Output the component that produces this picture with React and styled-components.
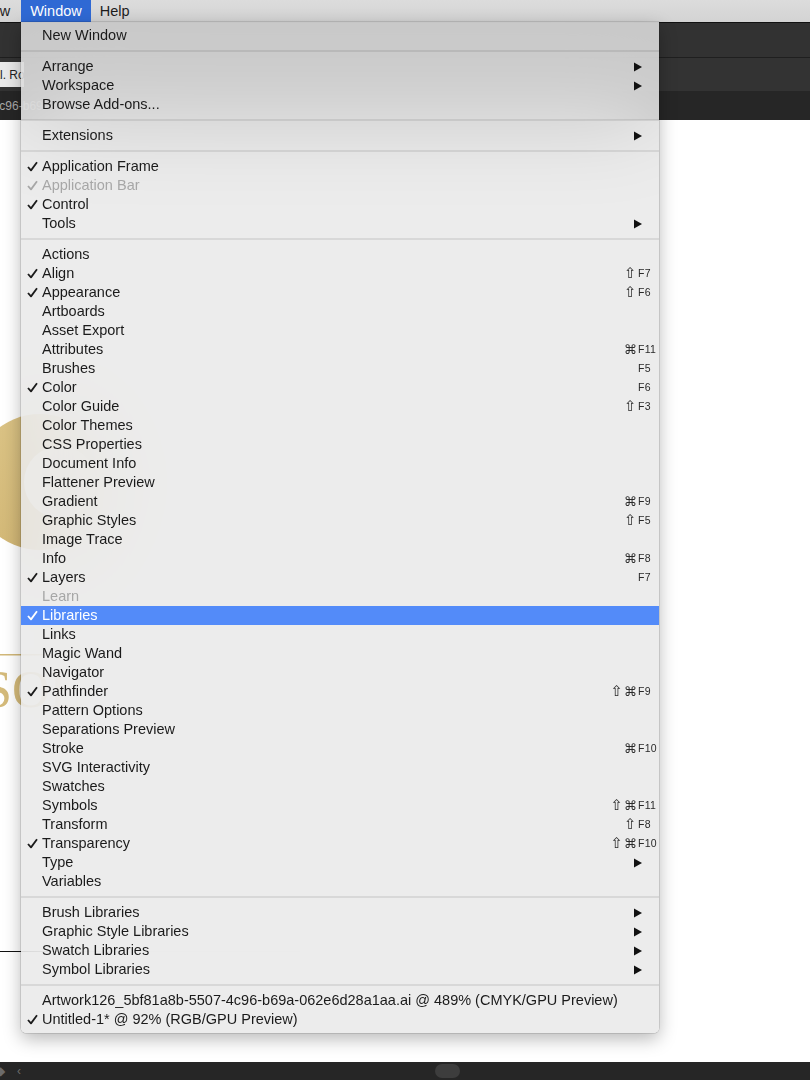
import React from "react";
import styled, { createGlobalStyle } from "styled-components";

const GlobalStyle = createGlobalStyle`
  html, body {
    margin: 0;
    padding: 0;
    background: #ffffff;
  }
  body {
    font-family: "Liberation Sans", Arial, sans-serif;
    overflow: hidden;
  }
`;

const Page = styled.div`
  position: relative;
  width: 810px;
  height: 1080px;
  display: flex;
  flex-direction: column;
  overflow: hidden;
`;

const MenuBar = styled.div`
  height: 22px;
  display: flex;
  align-items: stretch;
  background: linear-gradient(#dcdcdc, #d3d3d3);
  margin-left: -30px;
`;

const BarItem = styled.div`
  display: flex;
  align-items: center;
  padding: 0 ${(p) => p.$padRight || 9}px 0 9px;
  font-size: 14.5px;
  color: ${(p) => (p.$open ? "#ffffff" : "#1d1d1d")};
  background: ${(p) => (p.$open ? "#2f69d4" : "transparent")};
`;

const ToolBar = styled.div`
  height: 34px;
  background: #323232;
  border-top: 1px solid #121212;
`;

const TabBar = styled.div`
  height: 33px;
  background: #333333;
  border-top: 1px solid #1f1f1f;
  display: flex;
  align-items: flex-end;
`;

const DocTab = styled.div`
  height: 25px;
  width: 52px;
  margin: 0 0 4px -32px;
  background: #e9e9e9;
  color: #222;
  font-size: 12px;
  display: flex;
  align-items: center;
  white-space: nowrap;
  overflow: hidden;
  padding-left: 4px;
`;

const DocBar = styled.div`
  height: 29px;
  background: #262626;
  display: flex;
  align-items: center;
  overflow: hidden;
`;

const DocTitle = styled.span`
  color: #a9a9a9;
  font-size: 12px;
  white-space: nowrap;
  margin-left: -38px;
`;

const Canvas = styled.div`
  position: relative;
  flex: 1;
  background: #ffffff;
  overflow: hidden;
`;

const Artwork = styled.svg`
  position: absolute;
  left: 0;
  top: 0;
`;

const BottomBar = styled.div`
  height: 18px;
  background: #262626;
  display: flex;
  align-items: center;
`;

const NavArrow = styled.span`
  color: #6b6b6b;
  font-size: 12px;
  margin-left: ${(p) => p.$offset}px;
`;

const ScrollThumb = styled.div`
  width: 25px;
  height: 14px;
  border-radius: 7px;
  background: #3d3d3d;
  margin-left: 414px;
`;

const Dropdown = styled.div`
  position: absolute;
  top: 22px;
  left: 21px;
  width: 638px;
  padding: 4px 0;
  background: rgba(232, 232, 232, 0.83);
  backdrop-filter: blur(45px);
  -webkit-backdrop-filter: blur(45px);
  border-radius: 0 0 5px 5px;
  box-shadow: 0 0 0 0.5px rgba(0, 0, 0, 0.22), 0 6px 18px rgba(0, 0, 0, 0.28);
`;

const Separator = styled.div`
  height: 12px;
  display: flex;
  align-items: center;

  &::after {
    content: "";
    flex: 1;
    height: 2px;
    background: rgba(0, 0, 0, 0.085);
  }
`;

const Row = styled.div`
  height: 19px;
  display: grid;
  grid-template-columns: 21px 1fr auto 22px;
  align-items: center;
  font-size: 14.5px;
  color: ${(p) => (p.$active ? "#ffffff" : p.$disabled ? "#a7a7a7" : "#1b1b1b")};
  background: ${(p) => (p.$active ? "#538bf9" : "transparent")};
`;

const Check = styled.svg`
  display: block;
  margin: 0 0 0 6px;
`;

const Label = styled.span`
  white-space: nowrap;
  line-height: 19px;
`;

const Mods = styled.span`
  display: flex;
  justify-content: flex-end;
`;

const Mod = styled.span`
  width: 13.5px;
  text-align: center;
  font-family: "DejaVu Sans", sans-serif;
  font-size: ${(p) => (p.$shift ? "15px" : "13px")};
  line-height: 19px;
  color: #2a2a2a;
`;

const Key = styled.span`
  font-size: 10.5px;
  letter-spacing: 0.3px;
  line-height: 19px;
  color: #2a2a2a;
  padding-left: 1px;
`;

const Arrow = styled.svg`
  margin-left: -3px;
  display: block;
`;

const menu = [
  [{ label: "New Window" }],
  [
    { label: "Arrange", sub: true },
    { label: "Workspace", sub: true },
    { label: "Browse Add-ons..." },
  ],
  [{ label: "Extensions", sub: true }],
  [
    { label: "Application Frame", checked: true },
    { label: "Application Bar", checked: true, disabled: true },
    { label: "Control", checked: true },
    { label: "Tools", sub: true },
  ],
  [
    { label: "Actions" },
    { label: "Align", checked: true, mods: "⇧", key: "F7" },
    { label: "Appearance", checked: true, mods: "⇧", key: "F6" },
    { label: "Artboards" },
    { label: "Asset Export" },
    { label: "Attributes", mods: "⌘", key: "F11" },
    { label: "Brushes", key: "F5" },
    { label: "Color", checked: true, key: "F6" },
    { label: "Color Guide", mods: "⇧", key: "F3" },
    { label: "Color Themes" },
    { label: "CSS Properties" },
    { label: "Document Info" },
    { label: "Flattener Preview" },
    { label: "Gradient", mods: "⌘", key: "F9" },
    { label: "Graphic Styles", mods: "⇧", key: "F5" },
    { label: "Image Trace" },
    { label: "Info", mods: "⌘", key: "F8" },
    { label: "Layers", checked: true, key: "F7" },
    { label: "Learn", disabled: true },
    { label: "Libraries", checked: true, active: true },
    { label: "Links" },
    { label: "Magic Wand" },
    { label: "Navigator" },
    { label: "Pathfinder", checked: true, mods: "⇧⌘", key: "F9" },
    { label: "Pattern Options" },
    { label: "Separations Preview" },
    { label: "Stroke", mods: "⌘", key: "F10" },
    { label: "SVG Interactivity" },
    { label: "Swatches" },
    { label: "Symbols", mods: "⇧⌘", key: "F11" },
    { label: "Transform", mods: "⇧", key: "F8" },
    { label: "Transparency", checked: true, mods: "⇧⌘", key: "F10" },
    { label: "Type", sub: true },
    { label: "Variables" },
  ],
  [
    { label: "Brush Libraries", sub: true },
    { label: "Graphic Style Libraries", sub: true },
    { label: "Swatch Libraries", sub: true },
    { label: "Symbol Libraries", sub: true },
  ],
  [
    { label: "Artwork126_5bf81a8b-5507-4c96-b69a-062e6d28a1aa.ai @ 489% (CMYK/GPU Preview)" },
    { label: "Untitled-1* @ 92% (RGB/GPU Preview)", checked: true },
  ],
];

const MenuRow = ({ item }) => (
  <Row $active={item.active} $disabled={item.disabled}>
    {item.checked ? (
      <Check width="11" height="11" viewBox="0 0 11 11">
        <path
          d="M1 6 L4 9.4 L10 1.2"
          fill="none"
          stroke="currentColor"
          strokeWidth="1.8"
          strokeLinejoin="round"
        />
      </Check>
    ) : (
      <span />
    )}
    <Label>{item.label}</Label>
    <Mods>
      {(item.mods || "").split("").map((m, i) => (
        <Mod key={i} $shift={m === "⇧"}>
          {m}
        </Mod>
      ))}
    </Mods>
    {item.sub ? (
      <Arrow width="8" height="10" viewBox="0 0 8 10">
        <path d="M0 0.5 L8 5 L0 9.5 Z" fill="#111" />
      </Arrow>
    ) : (
      <Key>{item.key || ""}</Key>
    )}
  </Row>
);

const App = () => {
  return (
    <Page>
      <GlobalStyle />
      <MenuBar>
        <BarItem $padRight={11}>View</BarItem>
        <BarItem $open>Window</BarItem>
        <BarItem>Help</BarItem>
      </MenuBar>
      <ToolBar />
      <TabBar>
        <DocTab>Serial. Round</DocTab>
      </TabBar>
      <DocBar>
        <DocTitle>5507-4c96-b69a-062e6d28a1aa.ai</DocTitle>
      </DocBar>
      <Canvas>
        <Artwork width="400" height="942" viewBox="0 0 400 942">
          <defs>
            <linearGradient id="gold" x1="0" y1="0" x2="1" y2="1">
              <stop offset="0" stopColor="#dcc588" />
              <stop offset="1" stopColor="#cdb06c" />
            </linearGradient>
          </defs>
          <circle cx="40" cy="362" r="68" fill="url(#gold)" />
          <circle cx="60" cy="362" r="36" fill="#ffffff" />
          <rect x="-10" y="534" width="200" height="1.5" fill="#d2b879" />
          <text
            x="-17"
            y="587"
            fontFamily="Liberation Serif, serif"
            fontSize="52"
            fill="#d4ba7a"
          >
            SOL
          </text>
          <rect x="0" y="831" width="300" height="1" fill="#111" />
        </Artwork>
      </Canvas>
      <BottomBar>
        <NavArrow $offset={-4}>◆</NavArrow>
        <NavArrow $offset={12}>‹</NavArrow>
        <ScrollThumb />
      </BottomBar>
      <Dropdown>
        {menu.map((section, si) => (
          <React.Fragment key={si}>
            {si > 0 && <Separator />}
            {section.map((item) => (
              <MenuRow key={item.label} item={item} />
            ))}
          </React.Fragment>
        ))}
      </Dropdown>
    </Page>
  );
};

export default App;
